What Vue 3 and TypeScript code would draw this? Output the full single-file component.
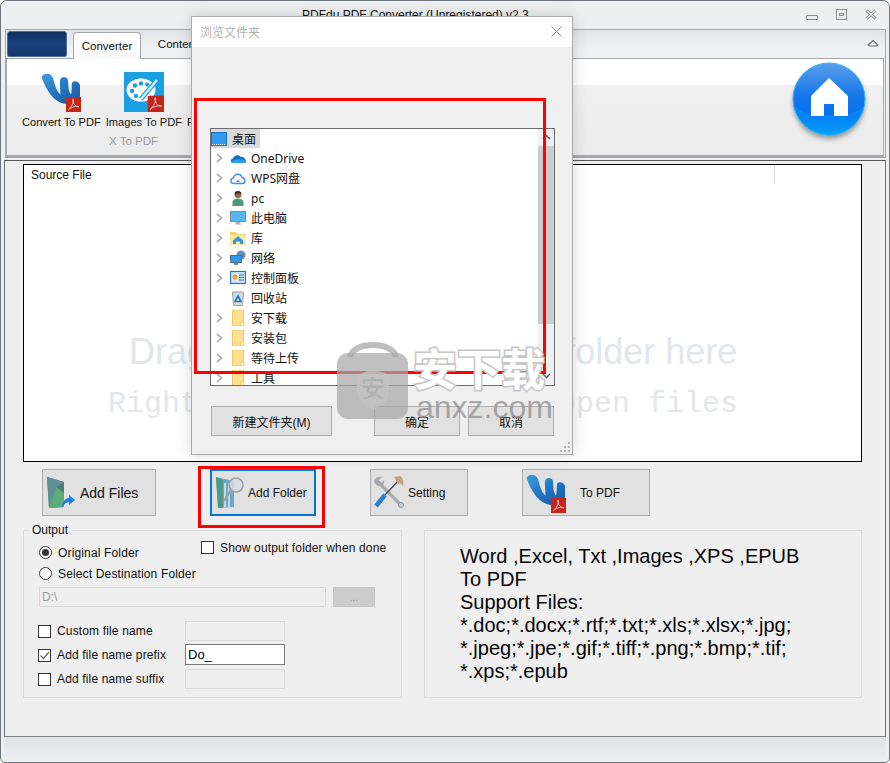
<script setup lang="ts">
import { ref } from "vue";

interface TreeRow {
  label: string;
  icon: string;
  arrow: boolean;
}

const treeRows = ref<TreeRow[]>([
  { label: "OneDrive", icon: "onedrive", arrow: true },
  { label: "WPS网盘", icon: "wps", arrow: true },
  { label: "pc", icon: "user", arrow: true },
  { label: "此电脑", icon: "computer", arrow: true },
  { label: "库", icon: "library", arrow: true },
  { label: "网络", icon: "network", arrow: true },
  { label: "控制面板", icon: "control", arrow: true },
  { label: "回收站", icon: "recycle", arrow: false },
  { label: "安下载", icon: "folder", arrow: true },
  { label: "安装包", icon: "folder", arrow: true },
  { label: "等待上传", icon: "folder", arrow: true },
  { label: "工具", icon: "folder", arrow: true },
]);

const supportLines = [
  "Word ,Excel, Txt ,Images ,XPS ,EPUB",
  "To PDF",
  "Support Files:",
  "*.doc;*.docx;*.rtf;*.txt;*.xls;*.xlsx;*.jpg;",
  "*.jpeg;*.jpe;*.gif;*.tiff;*.png;*.bmp;*.tif;",
  "*.xps;*.epub",
];
</script>

<template>
  <div class="window">
    <!-- shared icons -->
    <svg class="defs" width="0" height="0">
      <defs>
        <linearGradient id="wBlue" x1="0" y1="0" x2="0.7" y2="1">
          <stop offset="0" stop-color="#3f9fe0" />
          <stop offset="0.6" stop-color="#1f74c0" />
          <stop offset="1" stop-color="#1b5ea6" />
        </linearGradient>
        <symbol id="badge" viewBox="0 0 15 15">
          <rect width="15" height="15" fill="#c4261a" />
          <path d="M2.5 12.5C6 9.5 8 5 7.3 2.2 6.4 1 6.2 4.5 8.3 7.4 9.6 9.2 11.5 10 13 9.8 11 8.8 6 9.5 2.5 12.5Z" fill="none" stroke="#f6d8d4" stroke-width="0.8" />
        </symbol>
        <symbol id="wlogo" viewBox="0 0 40 40">
          <path d="M.5 5C3 0 10 1 12 6 14 13 15 19 19.500 22.500 19.500 17 18.500 12 19 8 20 4 26 4 27 8 27.500 13 27 19 30 22.500 31 20 30.500 14 31 11 32 8 38 9 39 13L39 27 26 32C14 32 5 18 .5 5Z" fill="url(#wBlue)" />
          <use href="#badge" x="25" y="25" width="15" height="15" />
        </symbol>
      </defs>
    </svg>

    <header class="titlebar">
      <span class="title">PDFdu PDF Converter (Unregistered) v2.3</span>
      <div class="win-btns">
        <span class="win-min"></span>
        <span class="win-max"><i></i></span>
        <svg width="12" height="11" viewBox="0 0 12 11">
          <path d="M1.500 1.500 10.500 9.500M10.500 1.500 1.500 9.500" stroke="#8a8d92" stroke-width="3" />
          <path d="M1.500 1.500 10.500 9.500M10.500 1.500 1.500 9.500" stroke="#eef0f2" stroke-width="1.200" />
        </svg>
      </div>
    </header>

    <section class="ribbon">
      <div class="tabs">
        <div class="app-btn"></div>
        <div class="tab active">Converter</div>
        <div class="tab next">Content</div>
        <svg class="collapse" width="12" height="8" viewBox="0 0 12 8">
          <path d="M1 6 6 1.500 11 6 9.500 7H2.500Z" fill="none" stroke="#6f7479" stroke-width="1.200" />
        </svg>
      </div>
      <div class="panel">
        <div class="tool-group">
          <div class="tools">
            <div class="tool">
              <svg width="40" height="40"><use href="#wlogo" /></svg>
              <span>Convert To PDF</span>
            </div>
            <div class="tool">
              <svg width="40" height="40" viewBox="0 0 40 40">
                <rect width="40" height="40" fill="#1a9fe2" />
                <ellipse cx="17" cy="18" rx="14.500" ry="11.500" fill="#fff" />
                <g fill="#1a9fe2">
                  <circle cx="8" cy="19" r="2.200" />
                  <circle cx="11" cy="13.500" r="2.200" />
                  <circle cx="17" cy="11.500" r="2.200" />
                  <circle cx="23" cy="12.500" r="2" />
                  <circle cx="12" cy="24" r="2.200" />
                </g>
                <path d="M17 27 33 8" stroke="#1a9fe2" stroke-width="5" />
                <path d="M17 27 33 8" stroke="#cfeefb" stroke-width="2.500" />
                <use href="#badge" x="23.500" y="23.500" width="16.500" height="16.500" />
              </svg>
              <span>Images To PDF</span>
            </div>
            <div class="tool tool-hidden"><span>P</span></div>
          </div>
          <div class="group-name">X To PDF</div>
        </div>
        <svg class="home" width="80" height="86" viewBox="0 0 80 86">
          <defs>
            <linearGradient id="homeBlue" x1="0" y1="0" x2="0" y2="1">
              <stop offset="0" stop-color="#5b9fe9" />
              <stop offset="0.45" stop-color="#1677ea" />
              <stop offset="0.75" stop-color="#0270ee" />
              <stop offset="1" stop-color="#02a0ff" />
            </linearGradient>
            <filter id="homeShadow" x="-20%" y="-20%" width="140%" height="140%">
              <feGaussianBlur stdDeviation="2.500" />
            </filter>
          </defs>
          <circle cx="40" cy="44" r="36" fill="#555" opacity="0.55" filter="url(#homeShadow)" />
          <circle cx="40" cy="40" r="36" fill="url(#homeBlue)" stroke="#22bdf8" stroke-width="1" />
          <path d="M4.500 46C14 60 66 60 75.500 46 70 70 52 76 40 76 28 76 10 70 4.500 46Z" fill="#08a0ff" opacity="0.4" />
          <path d="M40 19 59 37V57H45V45H35V57H22V37Z" fill="#fff" />
        </svg>
      </div>
    </section>

    <main class="content">
      <div class="source-list">
        <div class="list-head">
          <span>Source File</span>
          <i class="head-sep"></i>
        </div>
        <div class="hint">
          <p class="hint-drag">Drag and drop your files or folder here</p>
          <p class="hint-open">Right click this area to open files</p>
        </div>
      </div>

      <div class="actions">
        <button class="btn">
          <svg class="btn-icon" width="28" height="32" viewBox="0 0 28 32">
            <path d="M0 0 17 5V30L2 31Z" fill="#4b7f74" />
            <path d="M0 0 17 5 9 10 2 31Z" fill="#5f8f96" />
            <path d="M2 31 9 10 17 16V30Z" fill="#5dab7a" />
            <path d="M15 31C15 24 19 21 22 21V18L28 23 22 28V25C19 25 17 27 15 31Z" fill="#1b82e0" />
          </svg>
          <span class="big">Add Files</span>
        </button>
        <button class="btn focused">
          <svg class="btn-icon" width="28" height="32" viewBox="0 0 28 32">
            <path d="M0 0 18 4V30L2 31Z" fill="#6fa7c9" />
            <path d="M0 0 7 3V31H2Z" fill="#4f9a86" />
            <path d="M9 6V30M13 6V30" stroke="#dbe9f4" stroke-width="1.500" />
            <circle cx="20" cy="8" r="7" fill="#d6dde0" fill-opacity="0.85" stroke="#9a9da0" stroke-width="1.500" />
            <path d="M15 13 8 24" stroke="#a09f9a" stroke-width="2.200" />
          </svg>
          <span>Add Folder</span>
        </button>
        <button class="btn">
          <svg class="btn-icon tools-icon" width="32" height="33" viewBox="0 0 32 33">
            <path d="M5 6 29 30" stroke="#a9adb0" stroke-width="3.500" />
            <path d="M1 5C2 1 7 0 9 1L6 4 8 7 11 4C12 7 10 11 6 10 4 10 2 8 1 5Z" fill="#a6aaad" />
            <circle cx="28" cy="29" r="2.500" fill="#c9cccf" stroke="#989b9e" />
            <path d="M26 4 12 19" stroke="#3f3f3f" stroke-width="1.200" />
            <path d="M12 19 3 30" stroke="#2a7fd0" stroke-width="4.500" />
            <path d="M21 1 27 0C30 2 31 6 30 10L27 7 25 8Z" fill="#bca77e" />
          </svg>
          <span>Setting</span>
        </button>
        <button class="btn">
          <svg class="btn-icon wide" width="40" height="40"><use href="#wlogo" /></svg>
          <span>To PDF</span>
        </button>
      </div>

      <div class="lower">
        <div class="group output">
          <span class="legend">Output</span>
          <div class="mode-row">
            <div class="modes">
              <label class="opt"><i class="radio on"></i>Original Folder</label>
              <label class="opt"><i class="radio"></i>Select Destination Folder</label>
            </div>
            <label class="opt show-folder"><i class="check"></i>Show output folder when done</label>
          </div>
          <div class="path-row">
            <div class="field path">D:\</div>
            <div class="browse">...</div>
          </div>
          <div class="name-rows">
            <div class="name-row">
              <label class="opt"><i class="check"></i>Custom file name</label>
              <div class="field"></div>
            </div>
            <div class="name-row">
              <label class="opt">
                <i class="check">
                  <svg width="11" height="11" viewBox="0 0 11 11"><path d="M1.500 5.500 4.500 8.500 10 2" fill="none" stroke="#6a6a6a" stroke-width="1.300" /></svg>
                </i>Add file name prefix
              </label>
              <div class="field live">Do_</div>
            </div>
            <div class="name-row">
              <label class="opt"><i class="check"></i>Add file name suffix</label>
              <div class="field"></div>
            </div>
          </div>
        </div>
        <div class="group support">
          <p v-for="line in supportLines" :key="line">{{ line }}</p>
        </div>
      </div>
    </main>

    <footer class="statusbar"></footer>

    <!-- folder picker on top of the main window -->
    <div class="dialog">
      <div class="dlg-title">
        <span>浏览文件夹</span>
        <svg width="11" height="11" viewBox="0 0 11 11"><path d="M.5.5 10.500 10.500M10.500.5.5 10.500" stroke="#8d8d8d" /></svg>
      </div>
      <div class="dlg-body">
        <div class="tree">
          <div class="tree-rows">
            <div class="tree-root">
              <svg width="16" height="14" viewBox="0 0 16 14">
                <rect x=".5" y=".5" width="15" height="13" fill="#2f9bf0" stroke="#1470c0" />
                <path d="M1 12.500H15" stroke="#e8f4fd" stroke-dasharray="1 1" />
              </svg>
              <span>桌面</span>
            </div>
            <div v-for="row in treeRows" :key="row.label" class="tree-row">
              <svg class="arrow" width="7" height="10" viewBox="0 0 7 10">
                <path v-if="row.arrow" d="M1 1 5.500 5 1 9" fill="none" stroke="#a6a6a6" stroke-width="1.600" />
              </svg>
              <svg class="tree-icon" width="16" height="16" viewBox="0 0 16 16">
                <template v-if="row.icon === 'onedrive'">
                  <path d="M3 13C0 13 0 9 3 8.500 4 5 9 4 11 7 14 6.500 16 9.500 16 11 16 12.500 15 13 14 13Z" fill="#0f6fc6" />
                  <path d="M3 13C1 12.500 1 11 3 10.500L9 9 15.500 10C16 12 15 13 14 13Z" fill="#2a9be8" />
                </template>
                <template v-else-if="row.icon === 'wps'">
                  <path d="M4 13.500C0 13.500 0 8.500 3.500 8 4.500 3 11 3 12 7.500 16 8 16 13.500 12 13.500Z" fill="none" stroke="#3d8fe8" stroke-width="1.400" />
                  <path d="M6 12 8 9.500 10 12Z" fill="#3d8fe8" />
                </template>
                <template v-else-if="row.icon === 'user'">
                  <circle cx="8" cy="4.500" r="3.500" fill="#8a6a50" />
                  <path d="M5 5V2C6 1 10 1 11 2.500V4C9 3 7 3 5 5Z" fill="#3c2a20" />
                  <path d="M2.500 16V12C3 9 6 8.500 8 8.500S13 9 13.500 12V16Z" fill="#4f9a78" />
                </template>
                <template v-else-if="row.icon === 'computer'">
                  <rect x=".5" y="1.500" width="15" height="10" fill="#58b7f5" stroke="#7d8a94" />
                  <path d="M6 12H10L11 14.500H5Z" fill="#a9b4bb" />
                </template>
                <template v-else-if="row.icon === 'library'">
                  <path d="M0 2H6L8 4H16V15H0Z" fill="#f6d271" />
                  <path d="M0 5H16V15H0Z" fill="#fbe6a0" />
                  <path d="M8 6 13 10.500V14H10V11.500H6V14H3V10.500Z" fill="#2b9ae8" />
                </template>
                <template v-else-if="row.icon === 'network'">
                  <circle cx="11" cy="5" r="4.500" fill="#5f8fb8" />
                  <rect x=".5" y="5.500" width="11" height="7" fill="#2f9bf0" stroke="#4b6d88" />
                  <path d="M4 14H8" stroke="#7d8a94" stroke-width="2" />
                </template>
                <template v-else-if="row.icon === 'control'">
                  <rect x=".5" y="1.500" width="15" height="12" fill="#d3e8f6" stroke="#2374b8" stroke-width="1.200" />
                  <circle cx="5" cy="7" r="2.500" fill="#e8a32c" />
                  <path d="M9 5H14M9 7.500H14M9 10H14" stroke="#2374b8" />
                </template>
                <template v-else-if="row.icon === 'recycle'">
                  <path d="M2.500 2H13.500L12.500 15.500H3.500Z" fill="#d5dade" stroke="#9aa3a9" />
                  <path d="M8 6 11 11.500H5Z" fill="none" stroke="#1e78c8" stroke-width="1.600" />
                </template>
                <template v-else>
                  <path d="M2.500 0H13.500V16H2.500Z" fill="#ffe08e" stroke="#efc768" />
                  <path d="M11 16V12H14V16Z" fill="#fff1c4" stroke="#efc768" stroke-width=".8" />
                </template>
              </svg>
              <span>{{ row.label }}</span>
            </div>
          </div>
          <div class="tree-scroll">
            <svg width="9" height="6" viewBox="0 0 9 6"><path d="M1 5 4.500 1.500 8 5" fill="none" stroke="#606060" stroke-width="1.500" /></svg>
            <div class="scroll-thumb"></div>
            <svg class="scroll-down" width="9" height="6" viewBox="0 0 9 6"><path d="M1 1 4.500 4.500 8 1" fill="none" stroke="#606060" stroke-width="1.500" /></svg>
          </div>
        </div>
        <div class="dlg-actions">
          <button class="dlg-btn new-folder">新建文件夹(M)</button>
          <button class="dlg-btn push">确定</button>
          <button class="dlg-btn">取消</button>
        </div>
      </div>
      <svg class="grip" width="10" height="10" viewBox="0 0 10 10">
        <path d="M8 0h2v2H8zM4 4h2v2H4zM8 4h2v2H8zM0 8h2v2H0zM4 8h2v2H4zM8 8h2v2H8z" fill="#b4b4b4" />
      </svg>
    </div>

    <!-- annotations from the screenshot's author -->
    <div class="mark mark-tree"></div>
    <div class="mark mark-folder"></div>

    <!-- site watermark -->
    <div class="stamp">
      <svg width="72" height="82" viewBox="0 0 72 82">
        <path d="M13 18C16 2 56 2 59 18" fill="none" stroke="#a8a8a8" stroke-opacity=".75" stroke-width="6" />
        <rect y="14" width="71" height="66" rx="11" fill="#a8a8a8" fill-opacity=".72" />
        <path d="M36 30 52 36V54C50 64 42 68 36 71 30 68 22 64 20 54V36Z" fill="#c4c4c4" fill-opacity=".7" />
        <text x="36" y="58" text-anchor="middle" class="stamp-glyph">安</text>
      </svg>
      <div class="stamp-text">
        <span class="stamp-cn">安下载</span>
        <span class="stamp-en">anxz.com</span>
      </div>
    </div>
  </div>
</template>

<style scoped>
.window {
  position: relative;
  box-sizing: border-box;
  width: 890px;
  height: 763px;
  overflow: hidden;
  display: flex;
  flex-direction: column;
  background: #edeff1;
  border: 1px solid #6f757c;
  border-radius: 7px 7px 5px 5px;
  font-family: "Liberation Sans", "Noto Sans CJK SC", sans-serif;
  font-size: 12px;
  color: #111;
}
.defs {
  position: absolute;
}
p {
  margin: 0;
}
button {
  font: inherit;
  color: inherit;
}

.titlebar {
  height: 28px;
  flex: none;
  display: flex;
  align-items: center;
  padding-bottom: 1px;
  box-sizing: border-box;
}
.title {
  margin-left: 301px;
  white-space: nowrap;
}
.win-btns {
  margin-left: auto;
  margin-right: 12px;
  display: flex;
  align-items: center;
  gap: 18px;
}
.win-min {
  width: 10px;
  height: 3px;
  margin-top: 6px;
  border: 1px solid #85888d;
  border-radius: 1px;
}
.win-max {
  width: 9px;
  height: 9px;
  border: 1px solid #8e9196;
  display: flex;
  align-items: center;
  justify-content: center;
}
.win-max i {
  width: 3px;
  height: 1px;
  border: 1px solid #8e9196;
}

.ribbon {
  flex: none;
  margin: 0 3px 0 4px;
  height: 129px;
  box-sizing: border-box;
  border: 1px solid #a6a9ad;
  display: flex;
  flex-direction: column;
}
.tabs {
  height: 28px;
  flex: none;
  display: flex;
  align-items: flex-end;
  padding-left: 1px;
  background: linear-gradient(#e1e4e9, #f0f1f2 70%);
}
.app-btn {
  width: 60px;
  height: 26px;
  box-sizing: border-box;
  border: 1px solid #4a6f9c;
  border-radius: 3px 3px 2px 2px;
  background: linear-gradient(#0e2c60, #1a3f7c 45%, #15386f);
  margin-bottom: 1px;
}
.tab {
  width: 68px;
  height: 27px;
  box-sizing: border-box;
  display: flex;
  align-items: center;
  justify-content: center;
  font-size: 11.5px;
  padding-bottom: 1px;
}
.tab.next {
  padding-left: 6px;
}
.tab.active {
  margin-left: 6px;
  background: linear-gradient(#fff, #fafafa);
  border: 1px solid #a3a6aa;
  border-bottom: none;
  border-radius: 4px 4px 0 0;
  position: relative;
  top: 1px;
}
.collapse {
  margin: 0 6px 11px auto;
}
.panel {
  flex: 1;
  margin: 0;
  display: flex;
  box-sizing: border-box;
  border: 1px solid #a6a9ad;
  border-bottom-width: 2px;
  margin-right: 1px;
  background: linear-gradient(#fff 26px, #f1f1f1 26px, #eeeeee 60px, #ececec);
}
.tool-group {
  padding: 13px 0 0 15px;
  display: flex;
  flex-direction: column;
}
.tools {
  display: flex;
  gap: 5px;
}
.tool {
  display: flex;
  flex-direction: column;
  align-items: center;
  gap: 3px;
  font-size: 11.1px;
  line-height: 14px;
  white-space: nowrap;
}
.tool-hidden {
  justify-content: flex-end;
}
.group-name {
  margin: 5px 0 0 87px;
  color: #9a9a9a;
  font-size: 11.5px;
  line-height: 14px;
}
.home {
  margin: 0 14px 0 auto;
}

.content {
  flex: 1;
  display: flex;
  flex-direction: column;
  margin: 2px 3px 0;
  border: 1px solid #6f7378;
  border-top-color: #55585c;
  border-bottom-color: #7d8084;
  background: #efefef;
  min-height: 0;
}
.source-list {
  margin: 3px 0 0 18px;
  width: 839px;
  height: 298px;
  flex: none;
  box-sizing: border-box;
  border: 1px solid #000;
  background: #fff;
  position: relative;
}
.list-head {
  height: 19px;
  display: flex;
  align-items: center;
  padding-left: 7px;
}
.head-sep {
  width: 1px;
  height: 19px;
  margin-left: 682px;
  background: #dcdcdc;
}
.hint {
  padding-top: 150px;
  color: #e3e6ea;
  white-space: nowrap;
}
.hint-drag {
  font-size: 36px;
  line-height: 36px;
  padding-left: 105px;
}
.hint-open {
  font-family: "Liberation Mono", monospace;
  font-size: 30px;
  line-height: 40px;
  margin-top: 14px;
  padding-left: 84px;
}

.actions {
  margin: 7px 0 0 37px;
  height: 47px;
  flex: none;
  display: grid;
  grid-template-columns: 114px 106px 98px 128px;
  column-gap: 54px;
}
.btn {
  display: flex;
  align-items: center;
  padding: 0;
  background: #e1e1e1;
  border: 1px solid #adadad;
}
.btn.focused {
  border: 2px solid #0078d7;
}
.btn-icon {
  margin-left: 4px;
  margin-right: 5px;
  flex: none;
}
.focused .btn-icon {
  margin-left: 4px;
  margin-right: 4px;
}
.tools-icon {
  margin-left: 2px;
  margin-right: 3px;
}
.btn-icon.wide {
  margin-left: 3px;
  margin-right: 14px;
}
.big {
  font-size: 14px;
  letter-spacing: 0;
}

.lower {
  margin: 14px 0 0 18px;
  display: grid;
  grid-template-columns: 379px 438px;
  column-gap: 22px;
  height: 168px;
  flex: none;
}
.group {
  box-sizing: border-box;
  border: 1px solid #dcdcdc;
  display: flex;
  flex-direction: column;
}
.legend {
  align-self: flex-start;
  margin: -8px 0 0 5px;
  padding: 0 3px;
  background: #efefef;
  line-height: 14px;
}
.mode-row {
  display: flex;
  margin: 5px 0 0 15px;
}
.modes {
  width: 162px;
}
.opt {
  height: 21px;
  display: flex;
  align-items: center;
  letter-spacing: 0.15px;
  white-space: nowrap;
}
.radio {
  width: 11px;
  height: 11px;
  margin-right: 6px;
  border: 1px solid #333;
  border-radius: 50%;
  position: relative;
  background: #fff;
}
.radio.on::after {
  content: "";
  position: absolute;
  inset: 2px;
  border-radius: 50%;
  background: #333;
}
.check {
  width: 11px;
  height: 11px;
  margin-right: 6px;
  border: 1px solid #333;
  background: #fff;
  display: flex;
  flex: none;
}
.show-folder {
  height: 13px;
  margin-top: -1px;
}
.path-row {
  display: flex;
  gap: 7px;
  margin: 3px 0 0 15px;
}
.field {
  width: 100px;
  height: 20px;
  box-sizing: border-box;
  border: 1px solid #d9d9d9;
  background: #efefef;
  display: flex;
  align-items: center;
  padding-left: 2px;
}
.path {
  width: 287px;
  color: #9a9a9a;
}
.browse {
  width: 42px;
  height: 20px;
  background: #cdcdcd;
  border: 1px solid #c4c4c4;
  box-sizing: border-box;
  color: #a09a90;
  display: flex;
  justify-content: center;
  align-items: center;
  font-size: 10px;
}
.name-rows {
  margin: 13px 0 0 14px;
  display: flex;
  flex-direction: column;
  gap: 3px;
}
.name-row {
  display: grid;
  grid-template-columns: 147px 100px;
  align-items: center;
}
.name-row .opt {
  box-sizing: border-box;
  padding-top: 1px;
}
.field.live {
  height: 21px;
  background: #fff;
  border-color: #7a7a7a;
  font-size: 13px;
  color: #000;
}
.support {
  padding: 14px 0 0 35px;
  font-size: 20px;
  line-height: 23px;
  color: #050505;
}

.statusbar {
  height: 20px;
  flex: none;
  margin: 0 3px 5px;
  background: linear-gradient(#dde3ea, #e9edf2);
}

.dialog {
  position: absolute;
  left: 190px;
  top: 15px;
  width: 382px;
  height: 439px;
  box-sizing: border-box;
  border: 1px solid #a9a9a9;
  background: #f0f0f0;
  box-shadow: 0 0 14px rgba(0, 0, 0, 0.16);
  display: flex;
  flex-direction: column;
}
.dlg-title {
  height: 30px;
  flex: none;
  background: #fff;
  display: flex;
  align-items: center;
  justify-content: space-between;
  padding: 0 10px 2px 8px;
  box-sizing: border-box;
  color: #b4b4b4;
}
.dlg-body {
  flex: 1;
  padding: 81px 17px 0 18px;
  display: flex;
  flex-direction: column;
}
.tree {
  height: 258px;
  box-sizing: border-box;
  border: 1px solid #6e6e6e;
  background: #fff;
  display: flex;
  overflow: hidden;
  flex: none;
}
.tree-rows {
  flex: 1;
  overflow: hidden;
  font-family: "Noto Sans", "Noto Sans CJK SC", sans-serif;
}
.tree-root {
  height: 19px;
  width: 49px;
  display: flex;
  align-items: center;
  gap: 5px;
  background: #d9d9d9;
}
.tree-row {
  height: 20px;
  display: flex;
  align-items: center;
  padding-left: 5px;
}
.arrow {
  margin-right: 7px;
}
.tree-icon {
  margin-right: 5px;
  flex: none;
}
.tree-scroll {
  width: 16px;
  background: #f0f0f0;
  display: flex;
  flex-direction: column;
  align-items: center;
  padding-top: 5px;
  box-sizing: border-box;
}
.scroll-thumb {
  width: 100%;
  height: 178px;
  margin-top: 6px;
  background: #cdcdcd;
}
.scroll-down {
  margin-top: auto;
  margin-bottom: 6px;
}
.dlg-actions {
  display: flex;
  margin: 20px 0 0 1px;
}
.dlg-btn {
  width: 86px;
  height: 30px;
  padding: 0;
  background: #e1e1e1;
  border: 1px solid #adadad;
}
.new-folder {
  width: 121px;
}
.push {
  margin: 0 8px 0 42px;
}
.grip {
  position: absolute;
  right: 2px;
  bottom: 2px;
}

.mark {
  position: absolute;
  box-sizing: border-box;
  border: 3px solid #f00;
}
.mark-tree {
  left: 193px;
  top: 97px;
  width: 352px;
  height: 276px;
}
.mark-folder {
  left: 197px;
  top: 465px;
  width: 127px;
  height: 62px;
}

.stamp {
  position: absolute;
  left: 336px;
  top: 338px;
  display: flex;
  gap: 4px;
}
.stamp-glyph {
  font-size: 24px;
  fill: #b0b0b0;
  font-family: "Noto Sans CJK SC", sans-serif;
}
.stamp-text {
  display: flex;
  flex-direction: column;
  padding-top: 1px;
}
.stamp-cn {
  font-family: "Noto Sans CJK SC", sans-serif;
  font-size: 44px;
  font-weight: 700;
  line-height: 54px;
  color: #fff;
  -webkit-text-stroke: 3px #c6c6c6;
  paint-order: stroke fill;
}
.stamp-en {
  font-size: 32px;
  line-height: 26px;
  padding-left: 3px;
  color: rgba(140, 140, 140, 0.72);
}
</style>

<style>
html,
body {
  background: #fff;
}
</style>
